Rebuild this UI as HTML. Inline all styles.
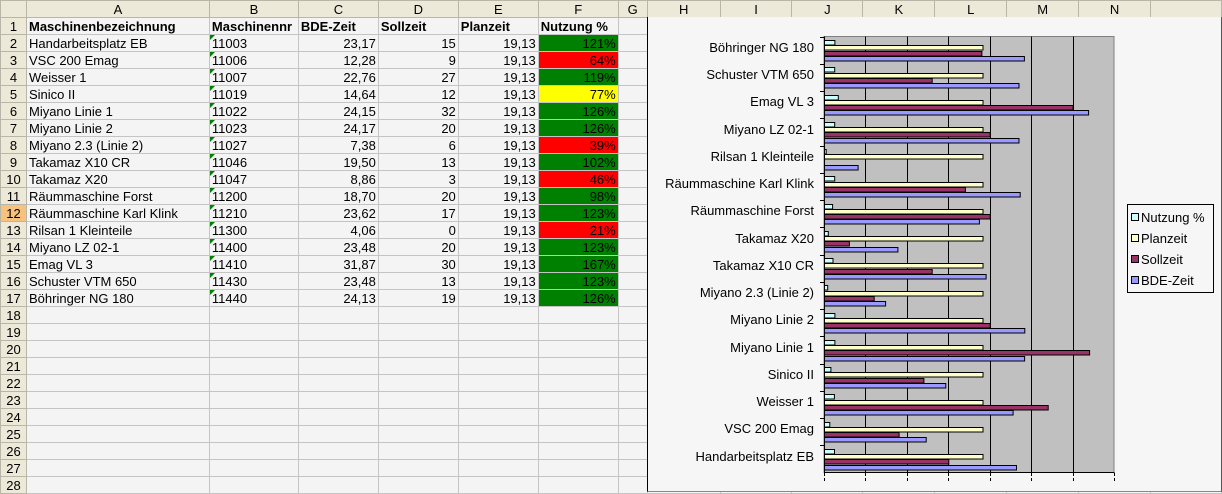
<!DOCTYPE html>
<html><head><meta charset="utf-8"><style>
*{margin:0;padding:0;box-sizing:border-box}
body{width:1222px;height:493px;overflow:hidden;background:#f4f4f4;font-family:"Liberation Sans",Arial,sans-serif;font-size:13px;color:#000;position:relative}
table{border-collapse:collapse;table-layout:fixed;position:absolute;left:0;top:0}
td{height:17px;border:1px solid #c4c4c4;padding:0 2px;white-space:nowrap;overflow:hidden;line-height:15px;background:#f4f4f4}
tr.h td{background:#ece9d8;text-align:center;border-color:#b8b6a8}
td.r{background:#ece9d8;text-align:center;border-color:#b8b6a8}
td.sel{background:#f6c27d}
td.n{text-align:right}
td.b{font-weight:bold}
td.t{position:relative}
td.t:before{content:"";position:absolute;left:0;top:0;border-top:5px solid #008000;border-right:5px solid transparent}
.g{background:#008000!important}.rd{background:#ff0000!important}.y{background:#ffff00!important}
#chart{position:absolute;left:647px;top:17px;width:575px;height:475px;background:#f6f6f6;border-left:1px solid #000;border-right:1px solid #555;border-bottom:1px solid #888}
</style></head><body>
<table>
<colgroup><col style="width:26px"><col style="width:183px"><col style="width:89px"><col style="width:80px"><col style="width:80px"><col style="width:80px"><col style="width:80px"><col style="width:29px"><col style="width:73px"><col style="width:72px"><col style="width:71px"><col style="width:72px"><col style="width:72px"><col style="width:72px"><col style="width:72px"><col style="width:71px"></colgroup>
<tr class="h"><td></td><td>A</td><td>B</td><td>C</td><td>D</td><td>E</td><td>F</td><td>G</td><td>H</td><td>I</td><td>J</td><td>K</td><td>L</td><td>M</td><td>N</td><td></td></tr>
<tr><td class="r">1</td><td class="b">Maschinenbezeichnung</td><td class="b">Maschinennr</td><td class="b">BDE-Zeit</td><td class="b">Sollzeit</td><td class="b">Planzeit</td><td class="b">Nutzung %</td><td></td><td></td><td></td><td></td><td></td><td></td><td></td><td></td><td></td></tr>
<tr><td class="r">2</td><td>Handarbeitsplatz EB</td><td class="t">11003</td><td class="n">23,17</td><td class="n">15</td><td class="n">19,13</td><td class="n g">121%</td><td></td><td></td><td></td><td></td><td></td><td></td><td></td><td></td><td></td></tr>
<tr><td class="r">3</td><td>VSC 200 Emag</td><td class="t">11006</td><td class="n">12,28</td><td class="n">9</td><td class="n">19,13</td><td class="n rd">64%</td><td></td><td></td><td></td><td></td><td></td><td></td><td></td><td></td><td></td></tr>
<tr><td class="r">4</td><td>Weisser 1</td><td class="t">11007</td><td class="n">22,76</td><td class="n">27</td><td class="n">19,13</td><td class="n g">119%</td><td></td><td></td><td></td><td></td><td></td><td></td><td></td><td></td><td></td></tr>
<tr><td class="r">5</td><td>Sinico II</td><td class="t">11019</td><td class="n">14,64</td><td class="n">12</td><td class="n">19,13</td><td class="n y">77%</td><td></td><td></td><td></td><td></td><td></td><td></td><td></td><td></td><td></td></tr>
<tr><td class="r">6</td><td>Miyano Linie 1</td><td class="t">11022</td><td class="n">24,15</td><td class="n">32</td><td class="n">19,13</td><td class="n g">126%</td><td></td><td></td><td></td><td></td><td></td><td></td><td></td><td></td><td></td></tr>
<tr><td class="r">7</td><td>Miyano Linie 2</td><td class="t">11023</td><td class="n">24,17</td><td class="n">20</td><td class="n">19,13</td><td class="n g">126%</td><td></td><td></td><td></td><td></td><td></td><td></td><td></td><td></td><td></td></tr>
<tr><td class="r">8</td><td>Miyano 2.3 (Linie 2)</td><td class="t">11027</td><td class="n">7,38</td><td class="n">6</td><td class="n">19,13</td><td class="n rd">39%</td><td></td><td></td><td></td><td></td><td></td><td></td><td></td><td></td><td></td></tr>
<tr><td class="r">9</td><td>Takamaz X10 CR</td><td class="t">11046</td><td class="n">19,50</td><td class="n">13</td><td class="n">19,13</td><td class="n g">102%</td><td></td><td></td><td></td><td></td><td></td><td></td><td></td><td></td><td></td></tr>
<tr><td class="r">10</td><td>Takamaz X20</td><td class="t">11047</td><td class="n">8,86</td><td class="n">3</td><td class="n">19,13</td><td class="n rd">46%</td><td></td><td></td><td></td><td></td><td></td><td></td><td></td><td></td><td></td></tr>
<tr><td class="r">11</td><td>Räummaschine Forst</td><td class="t">11200</td><td class="n">18,70</td><td class="n">20</td><td class="n">19,13</td><td class="n g">98%</td><td></td><td></td><td></td><td></td><td></td><td></td><td></td><td></td><td></td></tr>
<tr><td class="r sel">12</td><td>Räummaschine Karl Klink</td><td class="t">11210</td><td class="n">23,62</td><td class="n">17</td><td class="n">19,13</td><td class="n g">123%</td><td></td><td></td><td></td><td></td><td></td><td></td><td></td><td></td><td></td></tr>
<tr><td class="r">13</td><td>Rilsan 1 Kleinteile</td><td class="t">11300</td><td class="n">4,06</td><td class="n">0</td><td class="n">19,13</td><td class="n rd">21%</td><td></td><td></td><td></td><td></td><td></td><td></td><td></td><td></td><td></td></tr>
<tr><td class="r">14</td><td>Miyano LZ 02-1</td><td class="t">11400</td><td class="n">23,48</td><td class="n">20</td><td class="n">19,13</td><td class="n g">123%</td><td></td><td></td><td></td><td></td><td></td><td></td><td></td><td></td><td></td></tr>
<tr><td class="r">15</td><td>Emag VL 3</td><td class="t">11410</td><td class="n">31,87</td><td class="n">30</td><td class="n">19,13</td><td class="n g">167%</td><td></td><td></td><td></td><td></td><td></td><td></td><td></td><td></td><td></td></tr>
<tr><td class="r">16</td><td>Schuster VTM 650</td><td class="t">11430</td><td class="n">23,48</td><td class="n">13</td><td class="n">19,13</td><td class="n g">123%</td><td></td><td></td><td></td><td></td><td></td><td></td><td></td><td></td><td></td></tr>
<tr><td class="r">17</td><td>Böhringer NG 180</td><td class="t">11440</td><td class="n">24,13</td><td class="n">19</td><td class="n">19,13</td><td class="n g">126%</td><td></td><td></td><td></td><td></td><td></td><td></td><td></td><td></td><td></td></tr>
<tr><td class="r">18</td><td></td><td></td><td></td><td></td><td></td><td></td><td></td><td></td><td></td><td></td><td></td><td></td><td></td><td></td><td></td></tr>
<tr><td class="r">19</td><td></td><td></td><td></td><td></td><td></td><td></td><td></td><td></td><td></td><td></td><td></td><td></td><td></td><td></td><td></td></tr>
<tr><td class="r">20</td><td></td><td></td><td></td><td></td><td></td><td></td><td></td><td></td><td></td><td></td><td></td><td></td><td></td><td></td><td></td></tr>
<tr><td class="r">21</td><td></td><td></td><td></td><td></td><td></td><td></td><td></td><td></td><td></td><td></td><td></td><td></td><td></td><td></td><td></td></tr>
<tr><td class="r">22</td><td></td><td></td><td></td><td></td><td></td><td></td><td></td><td></td><td></td><td></td><td></td><td></td><td></td><td></td><td></td></tr>
<tr><td class="r">23</td><td></td><td></td><td></td><td></td><td></td><td></td><td></td><td></td><td></td><td></td><td></td><td></td><td></td><td></td><td></td></tr>
<tr><td class="r">24</td><td></td><td></td><td></td><td></td><td></td><td></td><td></td><td></td><td></td><td></td><td></td><td></td><td></td><td></td><td></td></tr>
<tr><td class="r">25</td><td></td><td></td><td></td><td></td><td></td><td></td><td></td><td></td><td></td><td></td><td></td><td></td><td></td><td></td><td></td></tr>
<tr><td class="r">26</td><td></td><td></td><td></td><td></td><td></td><td></td><td></td><td></td><td></td><td></td><td></td><td></td><td></td><td></td><td></td></tr>
<tr><td class="r">27</td><td></td><td></td><td></td><td></td><td></td><td></td><td></td><td></td><td></td><td></td><td></td><td></td><td></td><td></td><td></td></tr>
<tr><td class="r">28</td><td></td><td></td><td></td><td></td><td></td><td></td><td></td><td></td><td></td><td></td><td></td><td></td><td></td><td></td><td></td></tr>
</table>
<div id="chart"></div>
<svg id="svg" width="1222" height="493" style="position:absolute;left:0;top:0" font-family="Liberation Sans, Arial, sans-serif" font-size="13">
<rect x="824" y="36.5" width="290" height="436" fill="#c0c0c0" stroke="#808080"/>
<g id="bars"></g>
<g text-anchor="end" fill="#000">
<text x="814" y="52">Böhringer NG 180</text>
<text x="814" y="79">Schuster VTM 650</text>
<text x="814" y="106">Emag VL 3</text>
<text x="814" y="134">Miyano LZ 02-1</text>
<text x="814" y="161">Rilsan 1 Kleinteile</text>
<text x="814" y="188">Räummaschine Karl Klink</text>
<text x="814" y="215">Räummaschine Forst</text>
<text x="814" y="243">Takamaz X20</text>
<text x="814" y="270">Takamaz X10 CR</text>
<text x="814" y="297">Miyano 2.3 (Linie 2)</text>
<text x="814" y="324">Miyano Linie 2</text>
<text x="814" y="352">Miyano Linie 1</text>
<text x="814" y="379">Sinico II</text>
<text x="814" y="406">Weisser 1</text>
<text x="814" y="433">VSC 200 Emag</text>
<text x="814" y="461">Handarbeitsplatz EB</text>
</g>
<rect x="1127.5" y="204.5" width="86" height="88" fill="#f6f6f6" stroke="#000"/>
<rect x="1131.5" y="213.5" width="7" height="7" fill="#ccffff" stroke="#000"/><text x="1141" y="222">Nutzung %</text>
<rect x="1131.5" y="234.5" width="7" height="7" fill="#ffffcc" stroke="#000"/><text x="1141" y="243">Planzeit</text>
<rect x="1131.5" y="255.5" width="7" height="7" fill="#993366" stroke="#000"/><text x="1141" y="264">Sollzeit</text>
<rect x="1131.5" y="276.5" width="7" height="7" fill="#9999ff" stroke="#000"/><text x="1141" y="285">BDE-Zeit</text>
</svg>
<script>
(function(){
var d=[[23.17,15,19.13,121],[12.28,9,19.13,64],[22.76,27,19.13,119],[14.64,12,19.13,77],[24.15,32,19.13,126],[24.17,20,19.13,126],[7.38,6,19.13,39],[19.50,13,19.13,102],[8.86,3,19.13,46],[18.70,20,19.13,98],[23.62,17,19.13,123],[4.06,0,19.13,21],[23.48,20,19.13,123],[31.87,30,19.13,167],[23.48,13,19.13,123],[24.13,19,19.13,126]];
var s=290/35,h='',x0=824.5;
for(var g=1;g<7;g++){var gx=Math.round(824+g*290/7)+.5;h+='<line x1="'+gx+'" y1="36.5" x2="'+gx+'" y2="472.5" stroke="#000"/>';}
for(var g=0;g<=7;g++){var gx=Math.round(824+g*290/7)+.5;h+='<line x1="'+gx+'" y1="472.5" x2="'+gx+'" y2="476" stroke="#000"/><line x1="'+gx+'" y1="478" x2="'+gx+'" y2="481" stroke="#000"/>';}
for(var i=0;i<16;i++){var ct=472.5-(i+1)*27.25;var v=d[i];
var vals=[v[3]/100,v[2],v[1],v[0]],cols=['#ccffff','#ffffcc','#993366','#9999ff'];
for(var k=0;k<4;k++){var w=vals[k]*s;if(w<=0)continue;var y=Math.round(ct+3.5+k*5.3)+.5;
h+='<rect x="'+x0+'" y="'+y+'" width="'+w.toFixed(1)+'" height="4.5" fill="'+cols[k]+'" stroke="#000" stroke-width="1"/>';}
var ty=Math.round(ct)+.5;h+='<line x1="820" y1="'+ty+'" x2="824" y2="'+ty+'" stroke="#000"/>';}
h+='<line x1="824.5" y1="36.5" x2="824.5" y2="472.5" stroke="#000"/><line x1="824" y1="472.5" x2="1114" y2="472.5" stroke="#000"/>';
document.getElementById('bars').innerHTML=h;
})();
</script>
</body></html>
